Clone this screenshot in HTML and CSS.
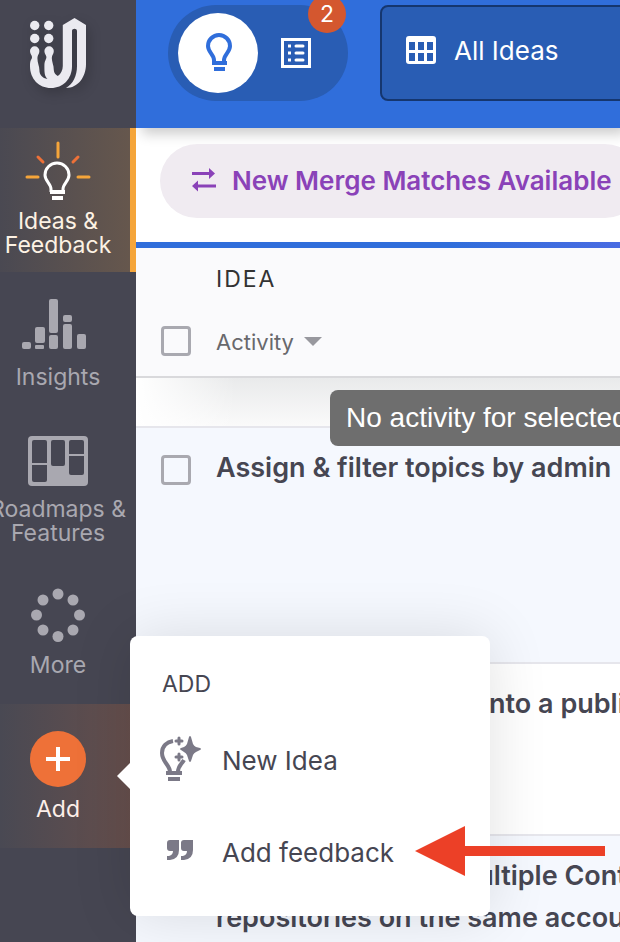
FILE: index.html
```html
<!DOCTYPE html>
<html lang="en">
<head>
    <meta charset="UTF-8">
    <meta name="viewport" content="width=device-width, initial-scale=1.0">
    <title>Ideas</title>
    <link rel="stylesheet" href="styles.css">
</head>
<body>
    <nav class="sidebar">
        <a class="logo" href="#" aria-label="Home">
            <svg width="58" height="72" viewBox="0 0 58 72" fill="#ebeaf0">
                <circle cx="4.700" cy="7.500" r="4.700"/>
                <circle cx="18.700" cy="7.500" r="4.700"/>
                <circle cx="4.700" cy="20.500" r="4.700"/>
                <circle cx="18.700" cy="20.500" r="4.700"/>
                <path d="M0 33a4.700 4.700 0 0 1 9.400 0c0 3-2 4-2 7 0 5 2 8 2 12 0 5 3 8 8 9-3-3-3-7-3-13 0-6 2-6 2-9 0-2-2-3-2-6a4.700 4.700 0 0 1 9.400 0c0 3-2 4-2 7 0 4 2 7 2 12 0 3 2 5 4 6 3-2 5-6 5-10V7L44.500 0 56 7v39c0 13-8 24-20 24 7-4 11-12 11-22V13c0-3-5-3-5 0v35c0 13-9 22-21 22S0 61 0 48c0-7 2-6 2-9 0-2-2-3-2-6z"/>
            </svg>
        </a>

        <a class="nav-item active" href="#">
            <svg width="66" height="56" viewBox="0 1 66 56" fill="none" overflow="visible">
                <path d="M33 1v14M2 35h11M53 35h11" stroke="#f5a53a" stroke-width="3" stroke-linecap="round"/>
                <path d="M13 15l5 5M53 15l-5 5" stroke="#ee7138" stroke-width="3" stroke-linecap="round"/>
                <path d="M26 50v-3c0-5-6-8-6-14a12 12 0 0 1 24 0c0 6-6 9-6 14v3" stroke="#fff" stroke-width="3"/>
                <path d="M25 50h15M27 56h11" stroke="#fff" stroke-width="4"/>
            </svg>
            <span>Ideas &amp;<br>Feedback</span>
        </a>

        <a class="nav-item" href="#">
            <svg width="66" height="56" viewBox="4 -1 66 56" fill="#a9a8b0" overflow="visible">
                <rect x="1" y="42" width="9" height="7" rx="2"/>
                <rect x="14" y="27" width="10" height="16" rx="2"/>
                <rect x="14" y="45" width="9" height="4" rx="1"/>
                <rect x="28" y="-1" width="9" height="34" rx="2"/>
                <rect x="28" y="35" width="9" height="14" rx="2"/>
                <rect x="42" y="15" width="9" height="7" rx="2"/>
                <rect x="42" y="24" width="9" height="25" rx="2"/>
                <rect x="56" y="34" width="9" height="15" rx="2"/>
            </svg>
            <span>Insights</span>
        </a>

        <a class="nav-item" href="#">
            <svg width="60" height="56" viewBox="0 0 60 56">
                <rect y="5" width="60" height="50" rx="4" fill="#a9a8b0"/>
                <g fill="#464652">
                    <rect x="4" y="9" width="15" height="42" rx="2"/>
                    <rect x="23" y="9" width="14" height="26" rx="2"/>
                    <rect x="41" y="9" width="15" height="35" rx="2"/>
                </g>
                <path d="M4 33h15M41 24h15" stroke="#a9a8b0" stroke-width="2"/>
            </svg>
            <span>Roadmaps &amp;<br>Features</span>
        </a>

        <a class="nav-item" href="#">
            <svg width="56" height="56" viewBox="0 0 56 56" fill="#a9a8b0">
                <circle cx="28" cy="7" r="5.500"/>
                <circle cx="43" cy="13" r="5.500"/>
                <circle cx="49.500" cy="28" r="5.500"/>
                <circle cx="43" cy="43" r="5.500"/>
                <circle cx="28" cy="49.500" r="5.500"/>
                <circle cx="13" cy="43" r="5.500"/>
                <circle cx="6.500" cy="28" r="5.500"/>
                <circle cx="13" cy="13" r="5.500"/>
            </svg>
            <span>More</span>
        </a>

        <div class="add">
            <button class="nav-item add-button" type="button">
                <svg width="56" height="56" viewBox="0 0 56 56">
                    <circle cx="28" cy="28" r="28" fill="#ee7138"/>
                    <path d="M28 16v24M16 28h24" stroke="#fff" stroke-width="4"/>
                </svg>
                <span>Add</span>
            </button>

            <div class="add-menu">
                <h2>ADD</h2>
                <a href="#">
                    <svg width="44" height="48" viewBox="0 1 44 48" fill="none">
                        <path d="M12 37c0-7-8-10-8-19 0-7 5-11 11-12M20 37c0-6 3-7 6-12" stroke="#7b7987" stroke-width="4"/>
                        <path d="M8 38h16M10 44h12" stroke="#7b7987" stroke-width="4"/>
                        <path d="M21 3v6M18 6h6M21 19v6M18 22h6" stroke="#7b7987" stroke-width="3" stroke-linecap="round"/>
                        <path d="M31 2q1-2 2 0l2 7q1 2 3 3l4 1q2 1 0 2l-4 2q-2 1-3 3l-2 6q-1 2-2 0l-2-6q-1-2-3-3l-3-2q-2-1 0-2l3-1q2-1 3-3z" fill="#7b7987"/>
                    </svg>
                    New Idea
                </a>
                <a href="#">
                    <svg width="44" height="48" viewBox="-2 0 44 48" fill="#7b7987">
                        <path d="M10 12h9v10q0 9-9 10H7v-4h2q4-1 4-5h-3q-3 0-3-3v-5q0-3 3-3zM24 12h9v10q0 9-9 10h-3v-4h2q4-1 4-5h-3q-3 0-3-3v-5q0-3 3-3z"/>
                    </svg>
                    Add feedback
                </a>
            </div>
        </div>
    </nav>

    <main class="content">
        <header class="toolbar">
            <div class="switcher">
                <button class="switch selected" type="button" aria-label="Ideas">
                    <svg width="28" height="38" viewBox="0 0 28 38" fill="none" stroke="#306edb" overflow="visible">
                        <path d="M10 29v-3c0-5-6-8-6-14a11 11 0 0 1 22 0c0 6-6 9-6 14v3" stroke-width="4"/>
                        <path d="M8 29h15M10 35h11" stroke-width="4"/>
                    </svg>
                </button>
                <button class="switch" type="button" aria-label="Feedback">
                    <svg width="30" height="30" viewBox="0 0 30 30" fill="none" stroke="#fff" stroke-width="3">
                        <rect x="1.500" y="1.500" width="27" height="27"/>
                        <path d="M7 8h3M7 15h3M7 22h3"/>
                        <path d="M15 8h7M15 15h7M15 22h7" stroke-linecap="round"/>
                    </svg>
                </button>
                <span class="badge">2</span>
            </div>
            <button class="view-picker" type="button">
                <svg width="30" height="28" viewBox="0 0 30 28">
                    <rect width="30" height="28" rx="3" fill="#fff"/>
                    <path d="M3 6h6v8H3zM12 6h6v8h-6zM21 6h6v8h-6zM3 17h6v8H3zM12 17h6v8h-6zM21 17h6v8h-6z" fill="#295db4"/>
                </svg>
                All Ideas
            </button>
        </header>

        <div class="notice">
            <button class="merge" type="button">
                <svg width="26" height="24" viewBox="0 0 26 24" fill="#8a42b8">
                    <path d="M2 4h17V0l6 5.500-6 5.500V7H2zM26 19.500H8v4L2 18l6-5.500v4h18z"/>
                </svg>
                New Merge Matches Available
            </button>
        </div>

        <table class="ideas">
            <thead>
                <tr>
                    <th class="check"><input type="checkbox" aria-label="Select all"></th>
                    <th>
                        <div class="heading">IDEA</div>
                        <div class="sort">
                            <select aria-label="Sort by">
                                <option>Activity</option>
                            </select>
                            <svg width="18" height="10" viewBox="0 0 18 10"><path d="M0 0h18L9 9z" fill="#98989e"/></svg>
                        </div>
                    </th>
                </tr>
            </thead>
            <tbody>
                <tr class="spacer"><td colspan="2"></td></tr>
                <tr class="shaded tall">
                    <td class="check"><input type="checkbox" id="idea1"></td>
                    <td><label for="idea1">Assign &amp; filter topics by admin</label></td>
                </tr>
                <tr>
                    <td class="check"><input type="checkbox" id="idea2"></td>
                    <td><label for="idea2">Merge private ideas into a public idea</label></td>
                </tr>
                <tr class="shaded">
                    <td class="check"><input type="checkbox" id="idea3"></td>
                    <td><label for="idea3">Ability to connect Multiple Content<br>repositories on the same account</label></td>
                </tr>
            </tbody>
        </table>
        <div class="tooltip" role="tooltip">No activity for selected range</div>
    </main>

    <svg class="pointer" width="190" height="50" viewBox="0 0 190 50" fill="#ec4027">
        <path d="M0 25L50 0v20h140v10H50v20z"/>
    </svg>
</body>
</html>
```
FILE: styles.css
```css
* {
    margin: 0;
    padding: 0;
    box-sizing: border-box;
}

body {
    display: flex;
    height: 100vh;
    overflow: hidden;
    position: relative;
    background-color: #fff;
    color: #464652;
    font-family: Inter, "Open Sans", sans-serif;
    font-size: 26px;
}

button,
select {
    font: inherit;
    color: inherit;
    border: none;
    background: none;
    cursor: pointer;
}

a {
    color: inherit;
    text-decoration: none;
}

svg {
    flex-shrink: 0;
}

/* Sidebar */
.sidebar {
    position: relative;
    z-index: 3;
    flex: 0 0 136px;
    min-width: 0;
    background-color: #464652;
}

.logo {
    display: block;
    height: 128px;
    padding: 18px 0 0 30px;
}

.logo svg {
    filter: drop-shadow(3px 5px 6px rgba(0, 0, 0, 0.2));
}

.nav-item {
    display: flex;
    flex-direction: column;
    align-items: center;
    justify-content: center;
    gap: 10px;
    width: 136px;
    height: 144px;
    padding-right: 20px;
    color: #a9a8b0;
    font-size: 23px;
    line-height: 24px;
    text-align: center;
    white-space: nowrap;
}

.nav-item.active {
    padding-right: 14px;
    color: #fdf2e4;
    border-right: 6px solid #f5a53a;
    background: linear-gradient(to right, #4a4952, #66574d);
}

.add {
    position: relative;
}

.add-button {
    color: #fdefe9;
    background: linear-gradient(to right, #494953, #674f4c);
}

.add-menu {
    position: absolute;
    top: -68px;
    left: 130px;
    width: 360px;
    padding: 32px 24px 18px 28px;
    border-radius: 8px;
    background-color: #fff;
    box-shadow: 0 0 60px rgba(0, 0, 0, 0.12);
}

.add-menu::before {
    content: "";
    position: absolute;
    top: 127px;
    left: -13px;
    border: 13px solid transparent;
    border-left: none;
    border-right-color: #fff;
}

.add-menu h2 {
    padding-left: 4px;
    margin-bottom: 14px;
    font-size: 23px;
    font-weight: 400;
    line-height: 32px;
}

.add-menu a {
    display: flex;
    align-items: center;
    gap: 20px;
    height: 92px;
}

/* Top bar */
.content {
    position: relative;
    flex: 1;
    min-width: 0;
    overflow: hidden;
}

.toolbar {
    display: flex;
    gap: 32px;
    height: 128px;
    padding: 5px 0 27px 32px;
    background-color: #306edb;
    box-shadow: 6px 6px 12px rgba(0, 0, 0, 0.2);
}

.switcher {
    position: relative;
    display: flex;
    align-items: center;
    flex: 0 0 180px;
    padding-left: 10px;
    border-radius: 48px;
    background-color: #295db4;
}

.switch {
    display: flex;
    align-items: center;
    justify-content: center;
    width: 76px;
    height: 80px;
}

.switch.selected {
    width: 80px;
    border-radius: 50%;
    background-color: #fff;
}

.badge {
    position: absolute;
    top: -10px;
    right: 2px;
    width: 38px;
    height: 38px;
    border-radius: 50%;
    background-color: #d4572f;
    color: #fff;
    font-size: 23px;
    line-height: 38px;
    text-align: center;
}

.view-picker {
    display: flex;
    align-items: center;
    gap: 18px;
    flex: 1 0 320px;
    padding: 0 24px 6px;
    border: 2px solid #15366f;
    border-radius: 8px;
    background-color: #295db4;
    color: #fff;
}

.notice {
    display: flex;
    padding: 16px 24px 24px;
}

.merge {
    display: flex;
    align-items: center;
    gap: 16px;
    flex-shrink: 0;
    height: 74px;
    padding: 0 30px 2px;
    border-radius: 37px;
    background-color: #f0ebf1;
    color: #8a42b8;
    font-weight: 600;
    white-space: nowrap;
}

/* Ideas table */
.ideas {
    width: 100%;
    table-layout: fixed;
    border-collapse: separate;
    border-spacing: 0;
    border-top: 6px solid #306edb;
    border-image: linear-gradient(to right, #306edb 65%, #496be2) 1;
}

th {
    height: 130px;
    border-bottom: 2px solid #d9d9dc;
    background-color: #fafafc;
    color: #333;
    font-weight: 400;
    text-align: left;
    vertical-align: top;
}

.check {
    width: 80px;
    padding: 27px 0 0 25px;
}

th.check {
    padding-top: 78px;
}

.check input {
    display: block;
    width: 30px;
    height: 30px;
    border: 3px solid #a9a9b0;
    border-radius: 4px;
    appearance: none;
}

.heading {
    padding-top: 15px;
    font-size: 23px;
    line-height: 32px;
    letter-spacing: 2px;
}

.sort {
    display: flex;
    align-items: center;
    gap: 10px;
    margin-top: 31px;
    color: #68686c;
    font-size: 22px;
    line-height: 32px;
}

.sort select {
    appearance: none;
}

td {
    height: 172px;
    border-bottom: 2px solid #e6e6ec;
    vertical-align: top;
}

td label {
    display: block;
    padding-top: 19px;
    font-size: 27px;
    font-weight: 600;
    line-height: 42px;
    white-space: nowrap;
}

.shaded {
    background-color: #f5f8fe;
}

.tall td {
    height: 236px;
}

.spacer td {
    height: 50px;
    background: linear-gradient(to right, #fff, transparent 100px), linear-gradient(to bottom, #e9eaeb, #fafafa);
}

.tooltip {
    position: absolute;
    top: 390px;
    left: 194px;
    padding: 0 16px;
    border-radius: 8px;
    background-color: #6e6e6e;
    color: #fff;
    font-family: "Liberation Sans", Arial, sans-serif;
    font-size: 28px;
    line-height: 56px;
    white-space: nowrap;
}

.pointer {
    position: absolute;
    z-index: 4;
    top: 826px;
    left: 415px;
}
```
